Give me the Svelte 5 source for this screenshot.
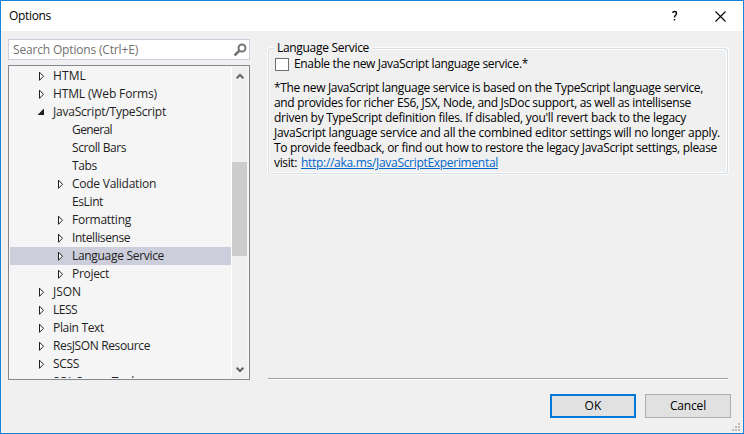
<script>
  // Each label carries the width it should occupy, in pixels.
  const rows = [
    { text: 'HTML', w: 33, arrow: 'closed' },
    { text: 'HTML (Web Forms)', w: 104, arrow: 'closed' },
    { text: 'JavaScript/TypeScript', w: 113, arrow: 'open' },
    { text: 'General', w: 40, child: true },
    { text: 'Scroll Bars', w: 54, child: true },
    { text: 'Tabs', w: 25, child: true },
    { text: 'Code Validation', w: 84, child: true, arrow: 'closed' },
    { text: 'EsLint', w: 31, child: true },
    { text: 'Formatting', w: 59, child: true, arrow: 'closed' },
    { text: 'Intellisense', w: 58, child: true, arrow: 'closed' },
    { text: 'Language Service', w: 92, child: true, arrow: 'closed', selected: true },
    { text: 'Project', w: 37, child: true, arrow: 'closed' },
    { text: 'JSON', w: 28, arrow: 'closed' },
    { text: 'LESS', w: 24, arrow: 'closed' },
    { text: 'Plain Text', w: 51, arrow: 'closed' },
    { text: 'ResJSON Resource', w: 97, arrow: 'closed' },
    { text: 'SCSS', w: 26, arrow: 'closed' },
    { text: 'SQL Server Tools', w: 86 }
  ];

  const lines = [
    { text: '*The new JavaScript language service is based on the TypeScript language service,', w: 429 },
    { text: 'and provides for richer ES6, JSX, Node, and JsDoc support, as well as intellisense', w: 417 },
    { text: "driven by TypeScript definition files. If disabled, you'll revert back to the legacy", w: 412 },
    { text: 'JavaScript language service and all the combined editor settings will no longer apply.', w: 446 },
    { text: 'To provide feedback, or find out how to restore the legacy JavaScript settings, please', w: 443 }
  ];

  function fit(node, width) {
    const natural = node.getBoundingClientRect().width;
    node.style.letterSpacing = `${(width - natural) / node.textContent.length}px`;
  }
</script>

<div class="window">
  <header>
    <span class="title"><span class="t" use:fit={42}>Options</span></span>
    <svg class="help" width="8" height="12" viewBox="0 0 8 12"><path d="M1.5 2.8Q1.9 1.5 3.6 1.5Q5.5 1.5 5.5 3.2Q5.5 4.4 4.5 5.2Q3.5 6 3.5 7.6M3.5 9V10.6" fill="none" stroke="#000" stroke-width="1.4" /></svg>
    <svg class="close" width="11" height="11" viewBox="0 0 11 11"><path d="M.5 .5L10.5 10.5M10.5 .5L.5 10.5" stroke="#000" stroke-width="1.1" /></svg>
  </header>

  <main>
    <aside>
      <div class="search">
        <span class="t" use:fit={125}>Search Options (Ctrl+E)</span>
        <svg width="14" height="14" viewBox="0 0 14 14"><circle cx="9" cy="5" r="3.5" fill="none" stroke="#717171" stroke-width="1.9" /><path d="M6.4 7.6L1.6 12.4" stroke="#717171" stroke-width="2.7" /></svg>
      </div>
      <div class="tree">
        <div class="rows">
          {#each rows as row}
            <div class="row" class:child={row.child} class:selected={row.selected}>
              <span class="arrow">
                {#if row.arrow === 'closed'}
                  <svg width="7" height="10" viewBox="0 0 7 10"><path d="M1.5 1.2V9.3L5.5 5.25Z" fill="#fff" stroke="#1e1e1e" stroke-width="1" /></svg>
                {:else if row.arrow === 'open'}
                  <svg width="7" height="10" viewBox="0 0 7 10"><path d="M6 1.5V8H-.5Z" fill="#1e1e1e" /></svg>
                {/if}
              </span>
              <span class="t" use:fit={row.w}>{row.text}</span>
            </div>
          {/each}
        </div>
        <div class="scroll">
          <svg width="8" height="7" viewBox="0 0 8 7"><path d="M.6 5.2L4 1.8L7.4 5.2" fill="none" stroke="#606060" stroke-width="2" /></svg>
          <div class="thumb"></div>
          <svg width="8" height="7" viewBox="0 0 8 7"><path d="M.6 1.6L4 5L7.4 1.6" fill="none" stroke="#606060" stroke-width="2" /></svg>
        </div>
      </div>
    </aside>

    <section>
      <div class="group">
        <div class="legend"><span class="t" use:fit={92}>Language Service</span></div>
        <label class="check"><span class="box"></span><span class="t" use:fit={234}>Enable the new JavaScript language service.*</span></label>
        <div class="para">
          {#each lines as line}
            <div><span class="t" use:fit={line.w}>{line.text}</span></div>
          {/each}
          <div class="last"><span class="t" use:fit={23}>visit:</span><span class="t link" use:fit={197}>http://aka.ms/JavaScriptExperimental</span></div>
        </div>
      </div>
      <div class="rule"></div>
    </section>
  </main>

  <footer>
    <div class="button ok"><span class="t" use:fit={17}>OK</span></div>
    <div class="button"><span class="t" use:fit={36}>Cancel</span></div>
    <svg class="grip" width="8" height="8" viewBox="0 0 8 8"><path d="M6 0h2v2H6zM3 3h2v2H3zM6 3h2v2H6zM0 6h2v2H0zM3 6h2v2H3zM6 6h2v2H6z" fill="#bcbcbc" /></svg>
  </footer>
</div>

<style>
  .window, .window * { box-sizing: border-box; }
  .window {
    position: relative;
    width: 744px;
    height: 434px;
    border: 1px solid #1883d7;
    background: #f0f0f0;
    color: #000;
    font: 12px/18px "Open Sans", "Noto Sans", sans-serif;
    display: flex;
    flex-direction: column;
    overflow: hidden;
  }
  svg { display: block; flex: none; }
  .t { display: inline-block; white-space: pre; flex: none; }
  header { height: 30px; flex: none; background: #fff; display: flex; align-items: center; padding: 0 17px 0 8px; }
  .title { flex: 1; }
  .help { margin-right: 36px; }
  main { display: flex; height: 349px; flex: none; padding: 8px 0 0 7px; }
  aside { width: 242px; flex: none; }
  .search {
    height: 21px;
    border: 1px solid #cccedb;
    background: #fff;
    color: #717171;
    display: flex;
    align-items: center;
    justify-content: space-between;
    padding: 0 2px 0 4px;
  }
  .tree {
    margin-top: 5px;
    height: 315px;
    border: 1px solid #828790;
    background: #f5f5f5;
    color: #1e1e1e;
    display: flex;
    padding: 1px;
  }
  .rows { width: 221px; overflow: hidden; }
  .row { height: 18px; display: flex; align-items: center; padding-left: 28px; }
  .child { padding-left: 47px; }
  .selected { background: #cccedb; }
  .arrow { width: 15px; height: 10px; flex: none; }
  .scroll {
    width: 16px;
    border-left: 1px solid #fff;
    background: #f0f0f0;
    display: flex;
    flex-direction: column;
    align-items: center;
    padding: 6px 0 5px;
  }
  .thumb { width: 15px; height: 94px; background: #cdcdcd; margin: 82px 0 auto; flex: none; }
  section { margin: 0 0 0 18px; width: 460px; display: flex; flex-direction: column; justify-content: space-between; }
  .group {
    margin: 9px 0 0;
    height: 126px;
    border: 1px solid #d5dfe5;
    border-radius: 3px;
    box-shadow: 0 0 0 1px #fcfcfc, inset 0 0 0 1px #fcfcfc;
    padding-left: 6px;
  }
  .legend { width: 99px; height: 18px; margin-top: -10px; margin-left: -1px; padding-left: 3px; background: #f0f0f0; line-height: 18px; }
  .check { display: flex; align-items: center; height: 18px; margin-top: -2px; gap: 5px; }
  .box { width: 14px; height: 13px; border: 1px solid #707070; background: #fff; }
  .para { margin: 7px 0 0 -1px; line-height: 15px; }
  .para div { height: 15px; }
  .last { display: flex; gap: 4px; }
  .link { color: #0066cc; text-decoration: underline; }
  .rule { height: 2px; flex: none; background: #a0a0a0; border-bottom: 1px solid #fff; }
  footer { flex: 1; display: flex; justify-content: flex-end; gap: 9px; padding: 14px 12px 0 0; }
  .button { width: 86px; height: 24px; border: 1px solid #adadad; background: #e1e1e1; display: flex; align-items: center; justify-content: center; }
  .ok { border: 2px solid #0078d7; }
  .grip { position: absolute; right: 3px; bottom: 2px; }
</style>
